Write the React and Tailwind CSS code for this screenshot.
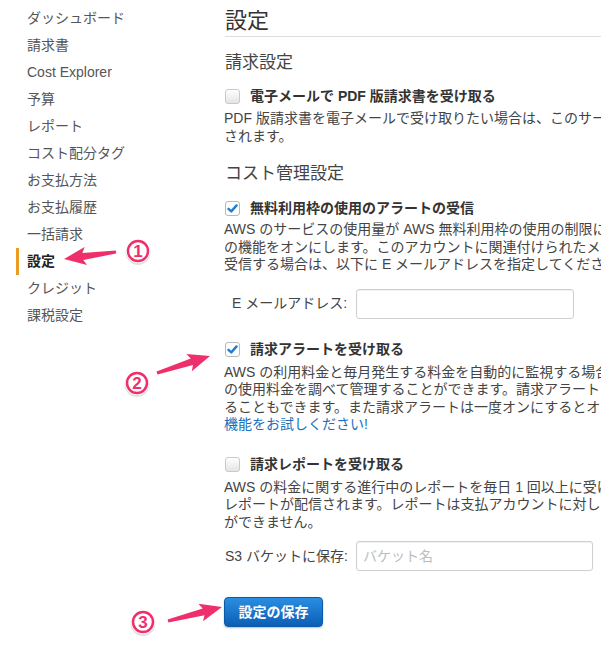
import React from 'react';

const navItems = [
  'ダッシュボード',
  '請求書',
  'Cost Explorer',
  '予算',
  'レポート',
  'コスト配分タグ',
  'お支払方法',
  'お支払履歴',
  '一括請求',
  '設定',
  'クレジット',
  '課税設定',
];

const Checkbox = ({ checked }) => (
  <span
    className={`inline-flex items-center justify-center w-[15px] h-[15px] rounded-[3px] border ${
      checked ? 'border-[#b9b9b9] bg-white' : 'border-[#c9c9c9] bg-linear-to-b from-white to-[#e4e4e4]'
    }`}
  >
    {checked && (
      <svg width="11" height="11" viewBox="0 0 11 11">
        <path d="M1.5 5.8 L4.3 8.4 L9.6 2.4" fill="none" stroke="#1f7fd3" strokeWidth="2.4" strokeLinecap="round" strokeLinejoin="round" />
      </svg>
    )}
  </span>
);

const Option = ({ checked, label, className = '' }) => (
  <div className={`flex items-center h-[20px] ${className}`}>
    <Checkbox checked={checked} />
    <span className="ml-[10px] text-[14px] font-bold text-[#333]">{label}</span>
  </div>
);

const Desc = ({ lines, className = '' }) => (
  <div className={`text-[14px] leading-[17.5px] text-[#444] whitespace-nowrap ${className}`}>
    {lines.map((l, i) => (
      <div key={i}>{l}</div>
    ))}
  </div>
);

// arrow polygon from tail to tip, tapering shaft with swept head
const arrowPoints = (x1, y1, x2, y2) => {
  const dx = x2 - x1;
  const dy = y2 - y1;
  const len = Math.hypot(dx, dy);
  const ux = dx / len;
  const uy = dy / len;
  const nx = -uy;
  const ny = ux;
  const head = 19;
  const bx = x2 - ux * head;
  const by = y2 - uy * head;
  const bbx = x2 - ux * (head + 3);
  const bby = y2 - uy * (head + 3);
  const p = (x, y) => `${x.toFixed(1)},${y.toFixed(1)}`;
  return [
    p(x1 + nx * 1.5, y1 + ny * 1.5),
    p(bx + nx * 3.5, by + ny * 3.5),
    p(bbx + nx * 9, bby + ny * 9),
    p(x2, y2),
    p(bbx - nx * 9, bby - ny * 9),
    p(bx - nx * 3.5, by - ny * 3.5),
    p(x1 - nx * 1.5, y1 - ny * 1.5),
  ].join(' ');
};

const Badge = ({ cx, cy, n }) => (
  <g>
    <circle cx={cx} cy={cy + 1.5} r="12.5" fill="#000" opacity="0.12" />
    <circle cx={cx} cy={cy} r="12" fill="#fff" />
    <circle cx={cx} cy={cy} r="10" fill="#fff" stroke="#ef2f6c" strokeWidth="2.5" />
    <text
      x={cx}
      y={cy + 6}
      textAnchor="middle"
      fontSize="17"
      fontWeight="bold"
      fill="#ef2f6c"
      fontFamily="Liberation Sans, sans-serif"
    >
      {n}
    </text>
  </g>
);

const App = () => {
  return (
    <div className="relative w-[601px] h-[663px] overflow-hidden bg-white font-['Liberation_Sans','Noto_Sans_CJK_JP',sans-serif]">
      <div className="flex">
        <div className="w-[225px] shrink-0 pt-[5px] pl-[16px]">
          {navItems.map((item) => {
            const active = item === '設定';
            return (
              <div
                key={item}
                className={`h-[27px] flex items-center pl-[8px] border-l-[3px] text-[14px] whitespace-nowrap ${
                  active ? 'border-[#eb9b22] font-bold text-[#222]' : 'border-transparent text-[#555]'
                }`}
              >
                {item}
              </div>
            );
          })}
        </div>

        <div className="w-[700px] shrink-0">
          <div className="pt-[7px] pb-[1px] border-b border-[#dedede]">
            <h1 className="text-[22px] leading-[28px] text-[#333] font-normal">設定</h1>
          </div>

          <h2 className="mt-[14px] text-[17px] leading-[24px] text-[#444] font-normal">請求設定</h2>
          <Option className="mt-[11px]" checked={false} label="電子メールで PDF 版請求書を受け取る" />
          <Desc
            className="mt-[4px] -ml-[1px]"
            lines={[
              'PDF 版請求書を電子メールで受け取りたい場合は、このサービスを有効にしてください。PDF 版請求書は毎月送信',
              'されます。',
            ]}
          />

          <h2 className="mt-[17px] text-[17px] leading-[24px] text-[#444] font-normal">コスト管理設定</h2>
          <Option className="mt-[12px]" checked label="無料利用枠の使用のアラートの受信" />
          <Desc
            className="mt-[3px] -ml-[1px]"
            lines={[
              'AWS のサービスの使用量が AWS 無料利用枠の使用の制限に近づいたか制限を超えたときにアラートを受け取るには、こ',
              'の機能をオンにします。このアカウントに関連付けられたメールアドレスにアラートが送信されます。別のアドレスで',
              '受信する場合は、以下に E メールアドレスを指定してください。',
            ]}
          />
          <div className="mt-[15px] flex items-center h-[30px]">
            <span className="w-[131px] pl-[7px] text-[14px] text-[#444] whitespace-nowrap">E メールアドレス:</span>
            <div className="w-[218px] h-[30px] rounded-[3px] border border-[#cfcfcf] bg-white shadow-[inset_0_1px_1px_rgba(0,0,0,0.06)]" />
          </div>

          <Option className="mt-[21px]" checked label="請求アラートを受け取る" />
          <Desc
            className="mt-[4px] -ml-[1px]"
            lines={[
              'AWS の利用料金と毎月発生する料金を自動的に監視する場合は、この機能をオンにします。請求アラートを使用すると、AWS',
              'の使用料金を調べて管理することができます。請求アラートを設定すると、E メールで通知を受け取',
              'ることもできます。また請求アラートは一度オンにするとオフにすることはできません。請求アラートの',
              <span className="text-[#1b6fba]">機能をお試しください!</span>,
            ]}
          />

          <Option className="mt-[21px]" checked={false} label="請求レポートを受け取る" />
          <Desc
            className="mt-[4px] -ml-[1px]"
            lines={[
              'AWS の料金に関する進行中のレポートを毎日 1 回以上に受け取ることができます。指定した S3 バケットに',
              'レポートが配信されます。レポートは支払アカウントに対してのみ有効です。メンバーアカウントはこの機能を使用すること',
              'ができません。',
            ]}
          />
          <div className="mt-[10px] flex items-center h-[30px]">
            <span className="w-[131px] text-[14px] text-[#444] whitespace-nowrap">S3 バケットに保存:</span>
            <div className="w-[237px] h-[30px] rounded-[3px] border border-[#cfcfcf] bg-white flex items-center pl-[6px] text-[14px] text-[#bdbdbd] shadow-[inset_0_1px_1px_rgba(0,0,0,0.06)]">
              バケット名
            </div>
          </div>

          <button
            type="button"
            className="mt-[26px] -ml-[1px] w-[99px] h-[30px] rounded-[4px] border border-[#0b58a6] bg-linear-to-b from-[#2a8ee2] to-[#0a5fb5] text-white text-[14px] font-bold shadow-[0_1px_2px_rgba(0,0,0,0.25)]"
          >
            設定の保存
          </button>
        </div>
      </div>

      <svg className="absolute inset-0 pointer-events-none" width="601" height="663" viewBox="0 0 601 663">
        <polygon points={arrowPoints(116, 252, 64, 259)} fill="#ef2f6c" />
        <Badge cx={138} cy={251} n="1" />
        <polygon points={arrowPoints(157, 373, 210, 356)} fill="#ef2f6c" />
        <Badge cx={137} cy={383} n="2" />
        <polygon points={arrowPoints(168, 621, 222, 607)} fill="#ef2f6c" />
        <Badge cx={143} cy={622} n="3" />
      </svg>
    </div>
  );
};

export default App;
